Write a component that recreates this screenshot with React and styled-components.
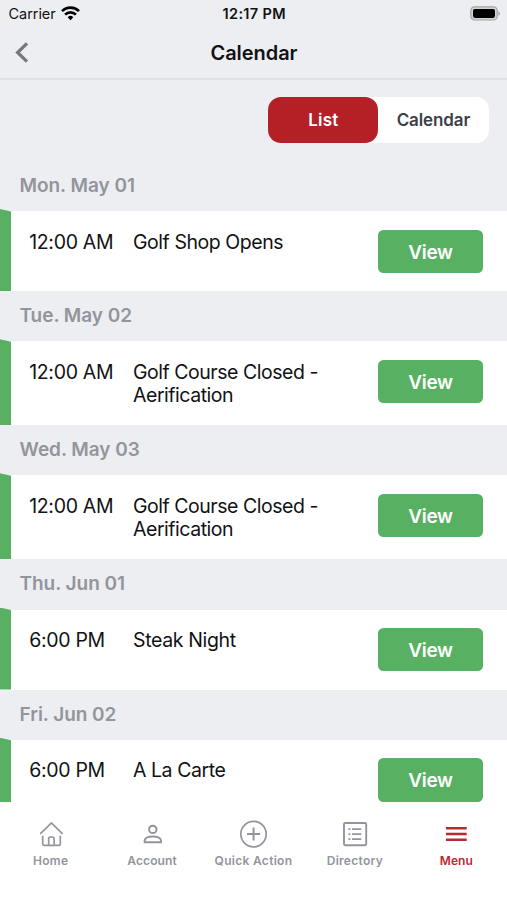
import React from "react";
import styled, { createGlobalStyle } from "styled-components";

const GlobalStyle = createGlobalStyle`
  * { box-sizing: border-box; }
  body { margin: 0; background: #fff; }
`;

const colors = {
  page: "#edeef2",
  green: "#58b163",
  red: "#b52027",
  muted: "#92959c",
};

const Screen = styled.div`
  display: flex;
  flex-direction: column;
  width: 507px;
  height: 900px;
  overflow: hidden;
  background: ${colors.page};
  color: #111214;
  font-family: Inter, "Liberation Sans", sans-serif;
`;

const StatusBar = styled.div`
  display: grid;
  grid-template-columns: 1fr auto 1fr;
  align-items: center;
  flex: none;
  height: 27px;
  padding: 0 7px 0 8.5px;
  font-size: 14.5px;
`;

const Carrier = styled.div`
  display: flex;
  align-items: center;
  gap: 5.5px;
  letter-spacing: -0.05px;
`;

const Clock = styled.div`
  font-weight: 600;
  letter-spacing: 0.35px;
`;

const Battery = styled.svg`
  justify-self: end;
  display: block;
`;

const TitleBar = styled.header`
  display: grid;
  grid-template-columns: 44px 1fr 44px;
  align-items: center;
  flex: none;
  height: 53px;
  border-bottom: 2px solid #e0e1e4;
`;

const BackButton = styled.button`
  display: flex;
  align-items: center;
  height: 44px;
  padding: 0 0 0 15px;
  border: 0;
  background: none;
`;

const Title = styled.h1`
  margin: 0 0 0 1px;
  text-align: center;
  font-size: 20px;
  font-weight: 600;
  line-height: 26px;
  letter-spacing: -0.05px;
`;

const Toolbar = styled.div`
  display: flex;
  justify-content: flex-end;
  flex: none;
  height: 80.75px;
  padding: 17px 18.5px 0 0;
`;

const Segmented = styled.div`
  display: flex;
  width: 220.25px;
  height: 45.5px;
  border-radius: 13px;
  background: #fff;
`;

const Segment = styled.button`
  flex: 1;
  padding: 0;
  border: 0;
  border-radius: 13px;
  background: ${(p) => (p.$active ? colors.red : "transparent")};
  color: ${(p) => (p.$active ? "#fff" : "#3d3f48")};
  font: 600 17px/46px Inter, sans-serif;
  letter-spacing: ${(p) => (p.$active ? "0.2px" : "-0.1px")};
`;

const EventList = styled.main`
  flex: 1;
  min-height: 0;
  overflow: hidden;
`;

const DayHeading = styled.h2`
  height: 50.2px;
  margin: 0;
  padding-left: 19.5px;
  color: ${colors.muted};
  font-size: 19px;
  font-weight: 600;
  line-height: 49px;
  letter-spacing: -0.04px;
`;

const EventRow = styled.div`
  display: grid;
  grid-template-columns: 11px 122px 1fr 104.7px;
  height: ${(p) => (p.$tall ? 84 : 80)}px;
  padding-right: 24.2px;
  background: #fff;
  font-size: 19.5px;
  line-height: 23.25px;
`;

const Marker = styled.div`
  margin-top: -2px;
  background: ${colors.green};
  clip-path: polygon(0 0, 100% 2.5px, 100% 100%, 0 100%);
`;

const EventTime = styled.div`
  padding: 19.8px 0 0 18.2px;
  letter-spacing: -0.32px;
`;

const EventName = styled.div`
  padding-top: 19.8px;
  letter-spacing: ${(p) => p.$tracking}px;
  white-space: pre-line;
`;

const ViewButton = styled.button`
  height: 43.3px;
  margin-top: 18.6px;
  padding: 1px 0 0;
  border: 0;
  border-radius: 5.5px;
  background: ${colors.green};
  color: #fff;
  font: 600 19px/42.3px Inter, sans-serif;
  letter-spacing: -0.3px;
`;

const ViewLabel = styled.span`
  display: block;
  padding-top: 1px;
`;

const TabBar = styled.nav`
  display: grid;
  grid-template-columns: repeat(5, 1fr);
  flex: none;
  height: 98px;
  background: #fff;
`;

const Tab = styled.div`
  display: flex;
  flex-direction: column;
  align-items: center;
  padding-top: 18px;
  color: ${(p) => (p.$active ? "#bd2830" : colors.muted)};
  font-size: 12px;
  font-weight: 600;
  line-height: 16px;
  letter-spacing: ${(p) => p.$tracking}px;
  white-space: nowrap;
`;

const TabIcon = styled.svg`
  width: 28px;
  height: 28px;
  margin-bottom: 5px;
  fill: none;
  stroke: currentColor;
  stroke-width: 1.7;
`;

const days = [
  { day: "Mon. May 01", time: "12:00 AM", name: "Golf Shop Opens", tracking: -0.45 },
  { day: "Tue. May 02", time: "12:00 AM", name: "Golf Course Closed -\nAerification", tracking: -0.47, tall: true },
  { day: "Wed. May 03", time: "12:00 AM", name: "Golf Course Closed -\nAerification", tracking: -0.47, tall: true },
  { day: "Thu. Jun 01", time: "6:00 PM", name: "Steak Night", tracking: -0.36 },
  { day: "Fri. Jun 02", time: "6:00 PM", name: "A La Carte", tracking: -0.45 },
];

const tabs = [
  {
    label: "Home",
    tracking: 0.25,
    icon: (
      <>
        <path d="M3.2 13.8 14.4 3 25.6 13.8" />
        <path d="M5.7 15.8v8.2q0 1.4 1.4 1.4h3.2q1.4 0 1.4-1.4v-5.4q0-1.6 1.6-1.6h2.2q1.6 0 1.6 1.6V24q0 1.4 1.4 1.4h3.4q1.4 0 1.4-1.4v-8.2M11 25.4h7" />
      </>
    ),
  },
  {
    label: "Account",
    tracking: 0.15,
    icon: (
      <g strokeWidth="2">
        <circle cx="14.8" cy="9.4" r="3.7" />
        <path d="M6.7 22.3v-2c0-2.5 4.1-3.9 8.1-3.9s8.1 1.4 8.1 3.9v2Z" />
      </g>
    ),
  },
  {
    label: "Quick Action",
    tracking: 0.3,
    icon: (
      <>
        <circle cx="14.5" cy="14.1" r="12.7" />
        <path d="M14.6 7.5v13M8.1 14h13" strokeWidth="2" />
      </>
    ),
  },
  {
    label: "Directory",
    tracking: 0.28,
    icon: (
      <>
        <rect x="3" y="3" width="22.2" height="22.2" rx="1.2" strokeWidth="1.9" />
        <path d="M11 9.2h9.3M11 14.2h9.3M11 19.2h9.3M7.4 9.2h1.9M7.4 14.2h1.9M7.4 19.2h1.9" />
      </>
    ),
  },
  {
    label: "Menu",
    tracking: 0.05,
    active: true,
    icon: <path d="M3.9 8.2h20.8M3.9 14.1h20.8M3.9 19.8h20.8" strokeWidth="2.5" />,
  },
];

export default function App() {
  return (
    <>
      <GlobalStyle />
      <Screen>
        <StatusBar>
          <Carrier>
            Carrier
            <svg width="19" height="15" viewBox="0 0 19 15" fill="none" stroke="#000" strokeWidth="2.7">
              <path d="M1 5.1a12.1 12.1 0 0 1 17 0" />
              <path d="M4.1 8.6a7.6 7.6 0 0 1 10.8 0" />
              <path d="m9.5 14.2-2.8-3a4 4 0 0 1 5.6 0Z" fill="#000" stroke="none" />
            </svg>
          </Carrier>
          <Clock>12:17 PM</Clock>
          <Battery width="30" height="15" viewBox="0 0 30 15">
            <rect x="0.8" y="0.8" width="26.4" height="13.2" rx="3.8" fill="#d3d4d6" stroke="#a3a4a8" strokeWidth="1.2" />
            <rect x="3" y="2.9" width="22" height="9" rx="1.8" fill="#000" />
            <path d="M28.3 5.2q1.7.8 1.7 2.3t-1.7 2.3Z" fill="#a3a4a8" />
          </Battery>
        </StatusBar>
        <TitleBar>
          <BackButton aria-label="Back">
            <svg width="14" height="22" viewBox="0 0 14 22" fill="none" stroke="#76777b" strokeWidth="3.2">
              <path d="M12 1.3 2.6 10.5 12 19.7" />
            </svg>
          </BackButton>
          <Title>Calendar</Title>
        </TitleBar>
        <Toolbar>
          <Segmented>
            <Segment $active>List</Segment>
            <Segment>Calendar</Segment>
          </Segmented>
        </Toolbar>
        <EventList>
          {days.map((d) => (
            <section key={d.day}>
              <DayHeading>{d.day}</DayHeading>
              <EventRow $tall={d.tall}>
                <Marker />
                <EventTime>{d.time}</EventTime>
                <EventName $tracking={d.tracking}>{d.name}</EventName>
                <ViewButton>
                  <ViewLabel>View</ViewLabel>
                </ViewButton>
              </EventRow>
            </section>
          ))}
        </EventList>
        <TabBar>
          {tabs.map((t) => (
            <Tab key={t.label} $active={t.active} $tracking={t.tracking}>
              <TabIcon viewBox="0 0 28 28">{t.icon}</TabIcon>
              {t.label}
            </Tab>
          ))}
        </TabBar>
      </Screen>
    </>
  );
}
